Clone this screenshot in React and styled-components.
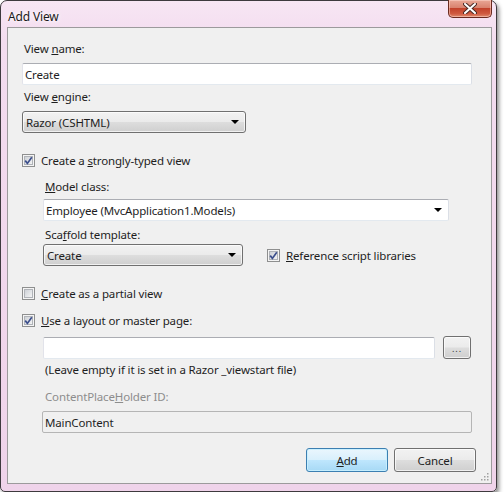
import React from 'react';
import styled, { createGlobalStyle } from 'styled-components';

const GlobalStyle = createGlobalStyle`
  html, body {
    margin: 0;
    padding: 0;
    background: #ffffff;
  }
  body {
    font-family: "Noto Sans", "Open Sans", Arial, sans-serif;
    font-size: 11.5px;
    letter-spacing: -0.15px;
  }
`;

const Window = styled.div`
  width: 497px;
  height: 492px;
  box-sizing: border-box;
  border: 1px solid #3e3a3e;
  border-radius: 7px 7px 5px 5px;
  background: linear-gradient(180deg, #f7e6f4 0%, #f3dcef 8%, #efd3ea 100%);
  box-shadow: 2px 3px 4px rgba(0, 0, 0, 0.45);
  display: flex;
  flex-direction: column;
  padding: 0 4px 7px 6px;
`;

const TitleBar = styled.div`
  height: 28px;
  display: flex;
  align-items: flex-start;
  justify-content: space-between;
`;

const Title = styled.div`
  padding: 7px 0 0 1px;
  font-size: 12px;
  color: #1a1a1a;
  text-shadow: 0 0 6px #ffffff, 0 0 3px #ffffff;
`;

const CloseButton = styled.div`
  width: 44px;
  height: 18px;
  margin-top: -1px;
  box-sizing: border-box;
  border: 1px solid #6b2a20;
  border-top: none;
  border-radius: 0 0 5px 5px;
  background: linear-gradient(180deg, #e9a796 0%, #d9826e 45%, #c2422b 50%, #cf5a40 80%, #e08a6e 100%);
  display: flex;
  align-items: center;
  justify-content: center;
  box-shadow: inset 0 0 0 1px rgba(255, 220, 210, 0.5);
`;

const Client = styled.div`
  flex: 1;
  background: #f0f0f0;
  border: 1px solid #9c9a9c;
  display: flex;
  flex-direction: column;
  padding: 13px 15px 11px 14px;
  position: relative;
`;

const Label = styled.div`
  line-height: 16px;
  height: 16px;
  padding-left: 2px;
  color: ${p => (p.$disabled ? '#8d8d8d' : '#1e1e1e')};
  margin-top: ${p => p.$mt || 0}px;
  white-space: nowrap;
`;

const Indent = styled.div`
  display: flex;
  flex-direction: column;
  padding-left: ${p => p.$pl || 21}px;
`;

const TextInput = styled.div`
  width: ${p => p.$w}px;
  height: 22px;
  box-sizing: border-box;
  margin-top: ${p => p.$mt || 0}px;
  border: 1px solid;
  border-color: ${p => (p.$disabled ? '#b5b5b5' : '#abadb3 #dbdfe6 #e3e9ef #e2e3ea')};
  border-radius: 2px;
  background: ${p => (p.$disabled ? '#f0f0f0' : '#ffffff')};
  display: flex;
  align-items: center;
  justify-content: space-between;
  padding: 0 6px 0 2px;
  color: #1e1e1e;
`;

const Select = styled.div`
  width: ${p => p.$w}px;
  height: 22px;
  box-sizing: border-box;
  margin-top: ${p => p.$mt || 0}px;
  border: 1px solid #707070;
  border-radius: 3px;
  background: linear-gradient(180deg, #f2f2f2 0%, #ebebeb 48%, #dddddd 52%, #cfcfcf 100%);
  box-shadow: inset 0 0 0 1px rgba(255, 255, 255, 0.7);
  display: flex;
  align-items: center;
  justify-content: space-between;
  padding: 0 6px 0 3px;
  color: #1e1e1e;
`;

const Arrow = styled.span`
  width: 0;
  height: 0;
  border-left: 4px solid transparent;
  border-right: 4px solid transparent;
  border-top: 4px solid #000000;
`;

const CheckRow = styled.div`
  display: flex;
  align-items: center;
  gap: 6px;
  height: 16px;
  margin-top: ${p => p.$mt || 0}px;
  color: #1e1e1e;
  white-space: nowrap;
`;

const Row = styled.div`
  display: flex;
  align-items: center;
  gap: ${p => p.$gap || 0}px;
  margin-top: ${p => p.$mt || 0}px;
`;

const BrowseButton = styled.div`
  width: 28px;
  height: 23px;
  box-sizing: border-box;
  border: 1px solid #707070;
  border-radius: 3px;
  background: linear-gradient(180deg, #f2f2f2 0%, #ebebeb 48%, #dddddd 52%, #cfcfcf 100%);
  box-shadow: inset 0 0 0 1px rgba(255, 255, 255, 0.7);
  display: flex;
  align-items: center;
  justify-content: center;
  font-size: 9px;
  letter-spacing: 1px;
  color: #333;
  padding-top: 2px;
`;

const ButtonBar = styled.div`
  display: flex;
  justify-content: flex-end;
  gap: 6px;
  margin-top: 15px;
`;

const Button = styled.div`
  width: 82px;
  height: 24px;
  box-sizing: border-box;
  border: 1px solid ${p => (p.$primary ? '#3c7fb1' : '#707070')};
  border-radius: 3px;
  background: ${p =>
    p.$primary
      ? 'linear-gradient(180deg, #eaf6fd 0%, #d9f0fc 48%, #bee6fd 52%, #a7d9f5 100%)'
      : 'linear-gradient(180deg, #f2f2f2 0%, #ebebeb 48%, #dddddd 52%, #cfcfcf 100%)'};
  box-shadow: inset 0 0 0 1px ${p => (p.$primary ? 'rgba(200, 240, 255, 0.9)' : 'rgba(255, 255, 255, 0.7)')};
  display: flex;
  align-items: center;
  justify-content: center;
  color: #1e1e1e;
`;

const Grip = styled.svg`
  position: absolute;
  right: 2px;
  bottom: 2px;
`;

const CheckBox = ({ checked }) => (
  <svg width="13" height="13" viewBox="0 0 13 13">
    <defs>
      <linearGradient id="cbg" x1="0" y1="0" x2="1" y2="1">
        <stop offset="0" stopColor="#cbcfd5" />
        <stop offset="1" stopColor="#f6f6f6" />
      </linearGradient>
    </defs>
    <rect x="0.5" y="0.5" width="12" height="12" fill="#f4f4f4" stroke="#8e8f8f" />
    <rect x="2.5" y="2.5" width="8" height="8" fill="url(#cbg)" stroke="#b0b3b8" strokeWidth="1" />
    {checked && (
      <path d="M3.2 6.6 L5.4 9.4 L9.8 3.2" fill="none" stroke="#3c4f8c" strokeWidth="1.7" />
    )}
  </svg>
);

const Check = ({ checked, children, mt }) => (
  <CheckRow $mt={mt}>
    <CheckBox checked={checked} />
    <span>{children}</span>
  </CheckRow>
);

const App = () => (
  <>
    <GlobalStyle />
    <Window>
      <TitleBar>
        <Title>Add View</Title>
        <CloseButton>
          <svg width="14" height="11" viewBox="0 0 14 11">
            <path d="M2 1 L12 10 M12 1 L2 10" stroke="#4a2a26" strokeWidth="4" strokeLinecap="round" />
            <path d="M2 1 L12 10 M12 1 L2 10" stroke="#ffffff" strokeWidth="2" strokeLinecap="round" />
          </svg>
        </CloseButton>
      </TitleBar>
      <Client>
        <Label>View <u>n</u>ame:</Label>
        <TextInput $w={450} $mt={6}>Create</TextInput>
        <Label $mt={4}>View <u>e</u>ngine:</Label>
        <Select $w={224} $mt={6}>
          <span>Razor (CSHTML)</span>
          <Arrow />
        </Select>
        <Check checked mt={19}>Create a <u>s</u>trongly-typed view</Check>
        <Indent>
          <Label $mt={11}><u>M</u>odel class:</Label>
          <TextInput $w={406} $mt={4}>
            <span>Employee (MvcApplication1.Models)</span>
            <Arrow />
          </TextInput>
          <Label $mt={6}>Sca<u>f</u>fold template:</Label>
          <Row $gap={24} $mt={1}>
            <Select $w={200}>
              <span>Create</span>
              <Arrow />
            </Select>
            <Check checked><u>R</u>eference script libraries</Check>
          </Row>
        </Indent>
        <Check mt={19}><u>C</u>reate as a partial view</Check>
        <Check checked mt={11}><u>U</u>se a layout or master page:</Check>
        <Indent>
          <Row $gap={8} $mt={8}>
            <TextInput $w={392} />
            <BrowseButton>...</BrowseButton>
          </Row>
          <Label $mt={3}>(Leave empty if it is set in a Razor _viewstart file)</Label>
          <Label $mt={11} $disabled>ContentPlace<u>H</u>older ID:</Label>
        </Indent>
        <Indent $pl={20}>
          <TextInput $w={430} $mt={6} $disabled>MainContent</TextInput>
        </Indent>
        <ButtonBar>
          <Button $primary><span><u>A</u>dd</span></Button>
          <Button>Cancel</Button>
        </ButtonBar>
        <Grip width="9" height="9" viewBox="0 0 9 9">
          {[[7, 1], [7, 4], [4, 4], [7, 7], [4, 7], [1, 7]].map(([x, y]) => (
            <rect key={`${x}-${y}`} x={x} y={y} width="1.5" height="1.5" fill="#a0a0a0" />
          ))}
        </Grip>
      </Client>
    </Window>
  </>
);

export default App;
